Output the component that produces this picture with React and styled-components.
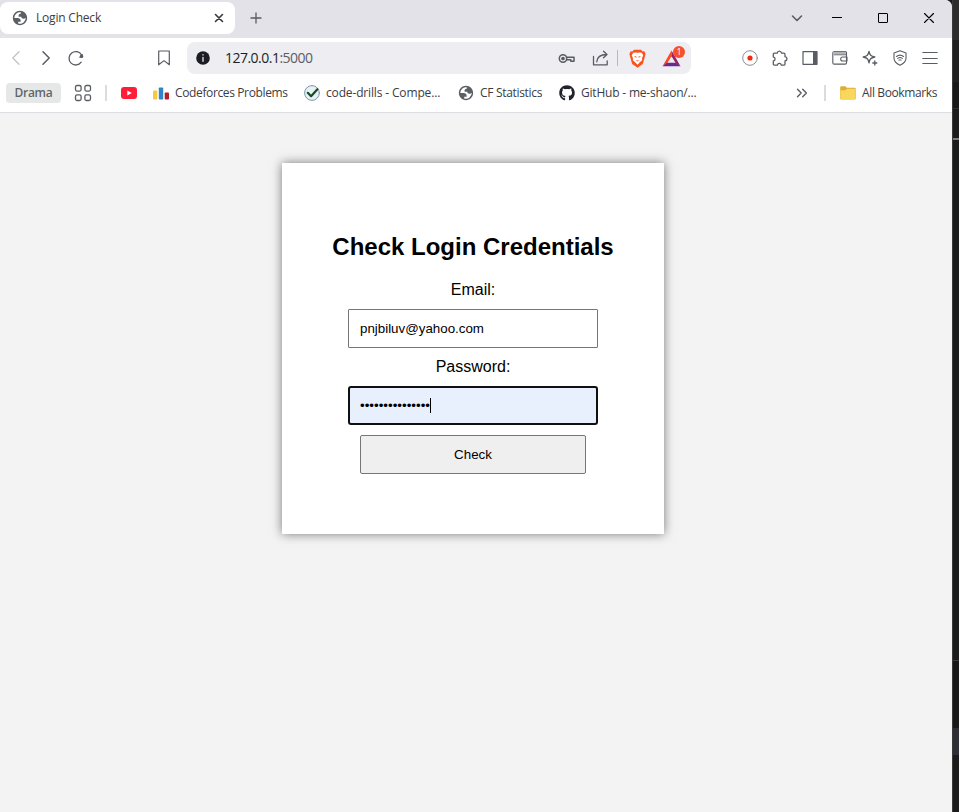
import React from 'react';
import styled, { createGlobalStyle, css } from 'styled-components';
import { FaGithub } from 'react-icons/fa';

const GlobalStyle = createGlobalStyle`
  *, *::before, *::after { box-sizing: border-box; }
  body { margin: 0; overflow: hidden; background: #2c2c2c; }
`;

const Desktop = styled.div`
  display: flex;
  width: 959px;
  height: 812px;
  background: #1b1b1b;
  font-family: 'Open Sans', 'Noto Sans', sans-serif;
`;

const BrowserWindow = styled.main`
  display: flex;
  flex-direction: column;
  width: 952px;
  height: 812px;
  overflow: hidden;
  background: #fff;
  border-top-right-radius: 7px;
`;

const Backdrop = styled.aside`
  flex: 1;
  display: flex;
  flex-direction: column;
  border-left: 1px solid #3a3a3a;
`;

const BackdropBand = styled.div`
  height: ${(p) => p.$height}px;
  background: ${(p) => p.$color};
`;

const TabStrip = styled.header`
  display: flex;
  flex: 0 0 38px;
  height: 38px;
  background: #e3e2e8;
`;

const Tab = styled.div`
  display: flex;
  align-items: center;
  width: 235px;
  height: 32px;
  margin-top: 2px;
  padding: 0 10px 0 12px;
  border-radius: 8px;
  background: #fff;
`;

const Label = styled.span`
  color: ${(p) => p.$color || '#3b3d43'};
  font-size: ${(p) => p.$size || 12}px;
  font-weight: ${(p) => p.$weight || 400};
  letter-spacing: ${(p) => p.$spacing || 0}px;
  line-height: 16px;
  white-space: nowrap;
`;

const TabTitle = styled(Label)`
  flex: 1;
  margin-left: 8px;
`;

const IconSlot = styled.span`
  display: flex;
  flex: 0 0 ${(p) => p.$width || 30}px;
  align-items: center;
  justify-content: center;
  height: 100%;
  color: ${(p) => p.$color || '#5a5c63'};
`;

const NewTab = styled(IconSlot)`
  margin-left: 6px;
  height: 36px;
`;

const WindowControls = styled.div`
  display: flex;
  margin-left: auto;
  height: 36px;
`;

const Toolbar = styled.nav`
  display: flex;
  flex: 0 0 40px;
  align-items: center;
  height: 40px;
  padding-left: 1px;
`;

const AddressBar = styled.div`
  display: flex;
  align-items: center;
  width: 504px;
  height: 32px;
  margin: 0 44px 0 8px;
  border-radius: 8px;
  background: #ededf2;
`;

const Url = styled(Label)`
  flex: 1;
  margin-left: 6px;
  line-height: 20px;
`;

const Separator = styled.span`
  flex: 0 0 ${(p) => p.$width || 1}px;
  height: 16px;
  background: ${(p) => p.$color || '#dcdbe2'};
`;

const RewardSlot = styled(IconSlot)`
  position: relative;
`;

const Badge = styled.span`
  position: absolute;
  top: 4px;
  left: 17px;
  width: 12px;
  height: 12px;
  border-radius: 50%;
  background: #f4512c;
  color: #fff;
  font-size: 9px;
  line-height: 12px;
  text-align: center;
`;

const BookmarkBar = styled.nav`
  display: flex;
  flex: 0 0 35px;
  align-items: center;
  height: 35px;
  padding: 0 14px 4px 6px;
  border-bottom: 1px solid #dddde1;
`;

const GroupChip = styled.span`
  display: flex;
  align-items: center;
  justify-content: center;
  width: 55px;
  height: 20px;
  border-radius: 4px;
  background: #e6e8e8;
`;

const Bookmark = styled.a`
  display: flex;
  align-items: center;
  gap: 6px;
  width: ${(p) => (p.$width ? `${p.$width}px` : 'auto')};
`;

const VideoBookmark = styled(IconSlot)`
  margin: 0 9px 0 7px;
`;

const Overflow = styled(IconSlot)`
  margin-left: auto;
  margin-right: 7px;
`;

const AllBookmarks = styled(Bookmark)`
  width: 98px;
  margin-left: 14px;
`;

const Page = styled.section`
  flex: 1;
  display: flex;
  justify-content: center;
  align-items: flex-start;
  padding: 50px 6px 0 0;
  background: #f3f3f3;
  color: #000;
  font-family: 'Liberation Sans', Arial, sans-serif;
`;

const Card = styled.form`
  display: flex;
  flex-direction: column;
  align-items: center;
  width: 382px;
  height: 371px;
  padding-top: 70px;
  background: #fff;
  box-shadow: 0 0 10px rgba(0, 0, 0, 0.5);
`;

const Heading = styled.h1`
  margin: 0;
  font-size: 24px;
  line-height: 28px;
  font-weight: 700;
`;

const FieldLabel = styled.label`
  margin-top: ${(p) => p.$gap}px;
  height: 18px;
  font-size: 16px;
  line-height: 18px;
`;

const control = css`
  display: flex;
  align-items: center;
  height: 39px;
  border: 1px solid #767676;
  font-size: 13.333px;
  line-height: 15px;
`;

const Field = styled.div`
  ${control}
  width: 250px;
  margin-top: ${(p) => p.$gap}px;
  padding-left: ${(p) => (p.$focused ? 10 : 11)}px;
  border-width: ${(p) => (p.$focused ? 2 : 1)}px;
  border-color: ${(p) => (p.$focused ? '#101010' : '#767676')};
  border-radius: ${(p) => (p.$focused ? 3 : 1)}px;
  background: ${(p) => (p.$focused ? '#e8f0fe' : '#fff')};
`;

const FieldValue = styled.span`
  white-space: nowrap;
`;

const Caret = styled.span`
  width: 1px;
  height: 15px;
  background: #000;
`;

const SubmitButton = styled.button`
  ${control}
  justify-content: center;
  width: 226px;
  margin: 10px 0 0;
  padding: 0;
  border-radius: 2px;
  background: #efefef;
  color: #000;
  font-family: inherit;
`;

function Icon({ size = 16, children, sw = 1.3, box = 16 }) {
  return (
    <svg width={size} height={size} viewBox={`0 0 ${box} ${box}`} fill="none" stroke="currentColor"
      strokeWidth={sw} strokeLinecap="round" strokeLinejoin="round">
      {children}
    </svg>
  );
}

const Globe = () => (
  <svg width="16" height="16" viewBox="0.8 0.8 22.4 22.4">
    <path fillRule="evenodd" fill="#5b5f66" d="M12 2C6.480 2 2 6.480 2 12s4.480 10 10 10 10-4.480 10-10S17.520 2 12 2zM4 12h4.400c3.407.022 4.922 1.730 4.543 5.127H9.488v2.470a8.004 8.004 0 0 0 10.498-8.083C19.327 12.504 18.332 13 17 13c-2.137 0-3.206-.916-3.206-2.750h-3.748c-.274-2.728.683-4.092 2.870-4.092 0-.975.327-1.597.811-1.970A8.004 8.004 0 0 0 4 12z" />
  </svg>
);

const Brave = () => (
  <svg width="17" height="19" viewBox="0 0 24 27">
    <path d="M7 1h10l2.200 2.500 2.500-.2L23.500 7l-.6 2.400-2.700 9.700c-.5 1.600-1 2.500-2.300 3.400L12 26.500l-5.900-4c-1.300-.9-1.800-1.800-2.300-3.400L1.100 9.400.5 7l1.800-3.700 2.500.2z" fill="#f9521b" />
    <path d="M12 5.500 15 5l3 .3 2.200 3.500-1.700 4 .1 3.300-3.600 3.200L12 22.300l-3-3-3.600-3.200.1-3.300-1.700-4L6 5.300 9 5z" fill="#fff" />
    <path d="m7 10 3.500.700-.2 2zm10 0-3.500.700.2 2zM9.300 15.500l2.700 1 2.700-1-2.700 2.300z" fill="#f9521b" />
  </svg>
);

const Rewards = () => (
  <svg width="19" height="17" viewBox="0 0 19 17">
    <path d="M9.500.5.500 16.200l4.800-3.100 4.200-6.900z" fill="#ff4724" />
    <path d="m9.500.5 9 15.700-4.800-3.100-4.200-6.900z" fill="#9e1f63" />
    <path d="M.5 16.200h18l-4.300-3.400H4.800z" fill="#662d91" />
  </svg>
);

const TOOL_ICONS = [
  <Icon key="record" box={16}><circle cx="8" cy="8" r="7.300" stroke="#8b8d92" strokeWidth="1" /><circle cx="8" cy="8" r="2.600" fill="#ef2b12" stroke="none" /></Icon>,
  <Icon key="puzzle" size={17} box={17}><path d="M2.500 3.200h2.700c.2-1.200.9-2 2.100-2s2 .8 2.200 2h2.300c.8 0 1.200.4 1.200 1.200v2.300c1.300.2 2 .9 2 2.100s-.7 2-2 2.200v3c0 .8-.4 1.200-1.200 1.200H9.300c-.2-1.200-.8-1.800-1.900-1.800s-1.800.6-2 1.800H2.500c-.8 0-1.200-.4-1.200-1.200v-3c1.200-.2 1.800-.9 1.800-2s-.6-1.900-1.800-2.100V4.400c0-.8.4-1.200 1.200-1.200z" /></Icon>,
  <Icon key="panel"><path d="M1 1.700h14v12.600H1z" strokeWidth="1.200" /><path d="M11 1.700h4v12.600h-4z" fill="currentColor" stroke="none" /></Icon>,
  <Icon key="wallet"><path d="M14.500 5V2.700C14.500 2 14 1.500 13.300 1.500H2.500C1.300 1.500.8 2 .8 3v9.700c0 .9.500 1.400 1.400 1.400h11c.9 0 1.300-.5 1.300-1.300V4.700H2.300M15 7h-4.300c-2.700 0-2.700 4 0 4H15z" strokeWidth="1.100" /><path d="M1.500 1.800h12.500v2.500H1.500z" fill="#b4b5b9" stroke="none" /></Icon>,
  <Icon key="spark"><path d="M7 1.300c.7 3.700 1.800 4.800 5.800 5.700-4 .9-5.100 2-5.800 5.800-.7-3.800-1.900-4.900-5.800-5.800C5.100 6.100 6.300 5 7 1.300zM12.800 11v4M10.800 13h4" /></Icon>,
  <Icon key="shield"><path d="M8 .8 14 3v5.200c0 3-2.300 5.300-6 7-3.700-1.700-6-4-6-7V3z" strokeWidth="1.100" /><path d="M4.500 6.500c2-1.600 5-1.600 7 0M5.700 8.400c1.300-1 3.300-1 4.600 0M7 10.100c.5-.4 1.500-.4 2 0" strokeWidth="1.100" /></Icon>,
  <Icon key="menu"><path d="M.8 2.500h14.400M.8 8.500h14.400M.8 13.500h14.400" strokeWidth="1.100" /></Icon>,
];

export default function App() {
  return (
    <Desktop>
      <GlobalStyle />
      <BrowserWindow>
        <TabStrip>
          <Tab>
            <Globe />
            <TabTitle $spacing={-0.2}>Login Check</TabTitle>
            <IconSlot $width={12} $color="#35373c"><Icon size={10} box={10} sw={1.600}><path d="m1.500 1.500 7 7m0-7-7 7" /></Icon></IconSlot>
          </Tab>
          <NewTab><Icon size={12} box={12}><path d="M6 1v10M1 6h10" /></Icon></NewTab>
          <WindowControls>
            <IconSlot $width={34}><Icon size={12} box={12} sw={1.600}><path d="m1.500 4 4.500 4.500L10.500 4" /></Icon></IconSlot>
            <IconSlot $width={46} $color="#000"><Icon size={10} box={10} sw={1}><path d="M0 4.500h10" /></Icon></IconSlot>
            <IconSlot $width={46} $color="#000"><Icon size={10} box={10} sw={1}><rect x=".5" y=".5" width="9" height="9" rx=".5" /></Icon></IconSlot>
            <IconSlot $width={46} $color="#000"><Icon size={10} box={10} sw={1.100}><path d="m.5.500 9 9m0-9-9 9" /></Icon></IconSlot>
          </WindowControls>
        </TabStrip>

        <Toolbar>
          <IconSlot $color="#c2c3c7"><Icon><path d="M11 1.800 4.800 8l6.200 6.200" /></Icon></IconSlot>
          <IconSlot><Icon sw={1.500}><path d="M5 1.800 11.200 8 5 14.200" /></Icon></IconSlot>
          <IconSlot><Icon><path d="M13.200 12.200A6.700 6.700 0 1 1 13.600 5" /><path d="M14.900 3.700v4h-4z" fill="currentColor" stroke="none" /><circle cx="13.500" cy="6.300" r="1.700" fill="currentColor" stroke="none" /></Icon></IconSlot>
          <IconSlot $width={58} />
          <IconSlot><Icon><path d="M2.700 1h10.600v13.800L8 10.600l-5.300 4.200z" strokeWidth="1.200" /></Icon></IconSlot>
          <AddressBar>
            <IconSlot $width={32}>
              <Icon size={14} box={14}><circle cx="7" cy="7" r="6.800" fill="#1c1c24" stroke="none" /><path d="M7 6.500v3.700M7 3.800v.1" stroke="#dddde2" strokeWidth="1.400" /></Icon>
            </IconSlot>
            <Url $size={14} $color="#1c1d24" $spacing={-0.52}>127.0.0.1<Label as="span" $size={14} $color="#5b5d65" $spacing={-0.52}>:5000</Label></Url>
            <IconSlot $width={34}>
              <Icon size={17} box={17} sw={1.500}><circle cx="5" cy="8.500" r="3.700" /><circle cx="5" cy="8.500" r="1.100" fill="currentColor" /><path d="M8.700 7.300H16v4h-3.200V9.700H8.700" /></Icon>
            </IconSlot>
            <IconSlot $width={34}>
              <Icon size={17} box={17}><path d="M1.500 6.500v8.300h13.700v-4M4.800 11.800c.3-5 3.500-7.300 10-7.300M11.500 1.300l3.500 3.200-3.500 3.200" /></Icon>
            </IconSlot>
            <Separator $color="#b8b8bf" />
            <IconSlot $width={38}><Brave /></IconSlot>
            <RewardSlot $width={31}><Rewards /><Badge>1</Badge></RewardSlot>
            <IconSlot $width={4} />
          </AddressBar>
          {TOOL_ICONS.map((icon) => <IconSlot key={icon.key}>{icon}</IconSlot>)}
        </Toolbar>

        <BookmarkBar>
          <GroupChip><Label $color="#62656a" $weight={600} $spacing={-0.3}>Drama</Label></GroupChip>
          <IconSlot $width={44}>
            <Icon size={18} box={18}><rect x="1.500" y="1.500" width="5.600" height="5.600" rx="1.500" /><rect x="10.900" y="1.500" width="5.600" height="5.600" rx="1.500" /><rect x="1.500" y="10.900" width="5.600" height="5.600" rx="1.500" /><rect x="10.900" y="10.900" width="5.600" height="5.600" rx="1.500" /></Icon>
          </IconSlot>
          <Separator $width={2} />
          <VideoBookmark>
            <svg width="16" height="12" viewBox="0 0 16 12"><rect width="16" height="12" rx="3" fill="#ff1d38" /><path d="m6.300 3.500 4.500 2.500-4.500 2.500z" fill="#fff" /></svg>
          </VideoBookmark>
          <Bookmark $width={151}>
            <svg width="16" height="16" viewBox="0 0 16 16"><rect y="5.500" width="4.300" height="9" rx=".8" fill="#f5c941" /><rect x="5.800" y="2.500" width="4.400" height="12" rx=".8" fill="#3184c8" /><rect x="11.700" y="7.500" width="4.300" height="7" rx=".8" fill="#b3202c" /></svg>
            <Label $spacing={-0.37}>Codeforces Problems</Label>
          </Bookmark>
          <Bookmark $width={154}>
            <Icon><circle cx="8" cy="8" r="7.400" fill="#e8f1f4" stroke="#7f98a8" strokeWidth="1" /><path d="m3.800 7.800 3.300 3.400 6.300-7" stroke="#164c27" strokeWidth="2.200" /></Icon>
            <Label $spacing={-0.15}>code-drills - Compe...</Label>
          </Bookmark>
          <Bookmark $width={101}>
            <Globe />
            <Label $spacing={-0.32}>CF Statistics</Label>
          </Bookmark>
          <Bookmark>
            <FaGithub size={16} color="#20242a" />
            <Label $spacing={-0.2}>GitHub - me-shaon/...</Label>
          </Bookmark>
          <Overflow><Icon size={12} box={12} sw={1.400}><path d="m1.500 2.300 3.700 3.700-3.700 3.700M6.700 2.300 10.400 6l-3.700 3.700" /></Icon></Overflow>
          <Separator $width={2} />
          <AllBookmarks>
            <svg width="16" height="14" viewBox="0 0 16 14"><path d="M.2 1.500Q.2.300 1.400.300h3.900L6.800 1.800h7.700q1.300 0 1.300 1.200v9.200q0 1.300-1.300 1.300h-13Q.2 13.500.200 12.200z" fill="#dfad35" /><path d="M.5 4.300h4.800L7 2.700h8.500v9.100q0 1.200-1.200 1.200H1.700Q.500 13 .500 11.800z" fill="#f9d65c" /></svg>
            <Label $spacing={-0.37}>All Bookmarks</Label>
          </AllBookmarks>
        </BookmarkBar>

        <Page>
          <Card>
            <Heading>Check Login Credentials</Heading>
            <FieldLabel $gap={20}>Email:</FieldLabel>
            <Field $gap={10}><FieldValue>pnjbiluv@yahoo.com</FieldValue></Field>
            <FieldLabel $gap={10}>Password:</FieldLabel>
            <Field $gap={10} $focused><FieldValue>•••••••••••••••</FieldValue><Caret /></Field>
            <SubmitButton type="button">Check</SubmitButton>
          </Card>
        </Page>
      </BrowserWindow>
      <Backdrop>
        <BackdropBand $height={40} $color="#2c2c2c" />
        <BackdropBand $height={42} $color="#202020" />
        <BackdropBand $height={26} $color="#181818" />
        <BackdropBand $height={1} $color="#303030" />
        <BackdropBand $height={29} $color="#1b1b1b" />
        <BackdropBand $height={2} $color="#7b7b7b" />
        <BackdropBand $height={520} $color="#1a1b1b" />
        <BackdropBand $height={1} $color="#3c3c3c" />
        <BackdropBand $height={67} $color="#191919" />
        <BackdropBand $height={27} $color="#2e2e35" />
      </Backdrop>
    </Desktop>
  );
}
